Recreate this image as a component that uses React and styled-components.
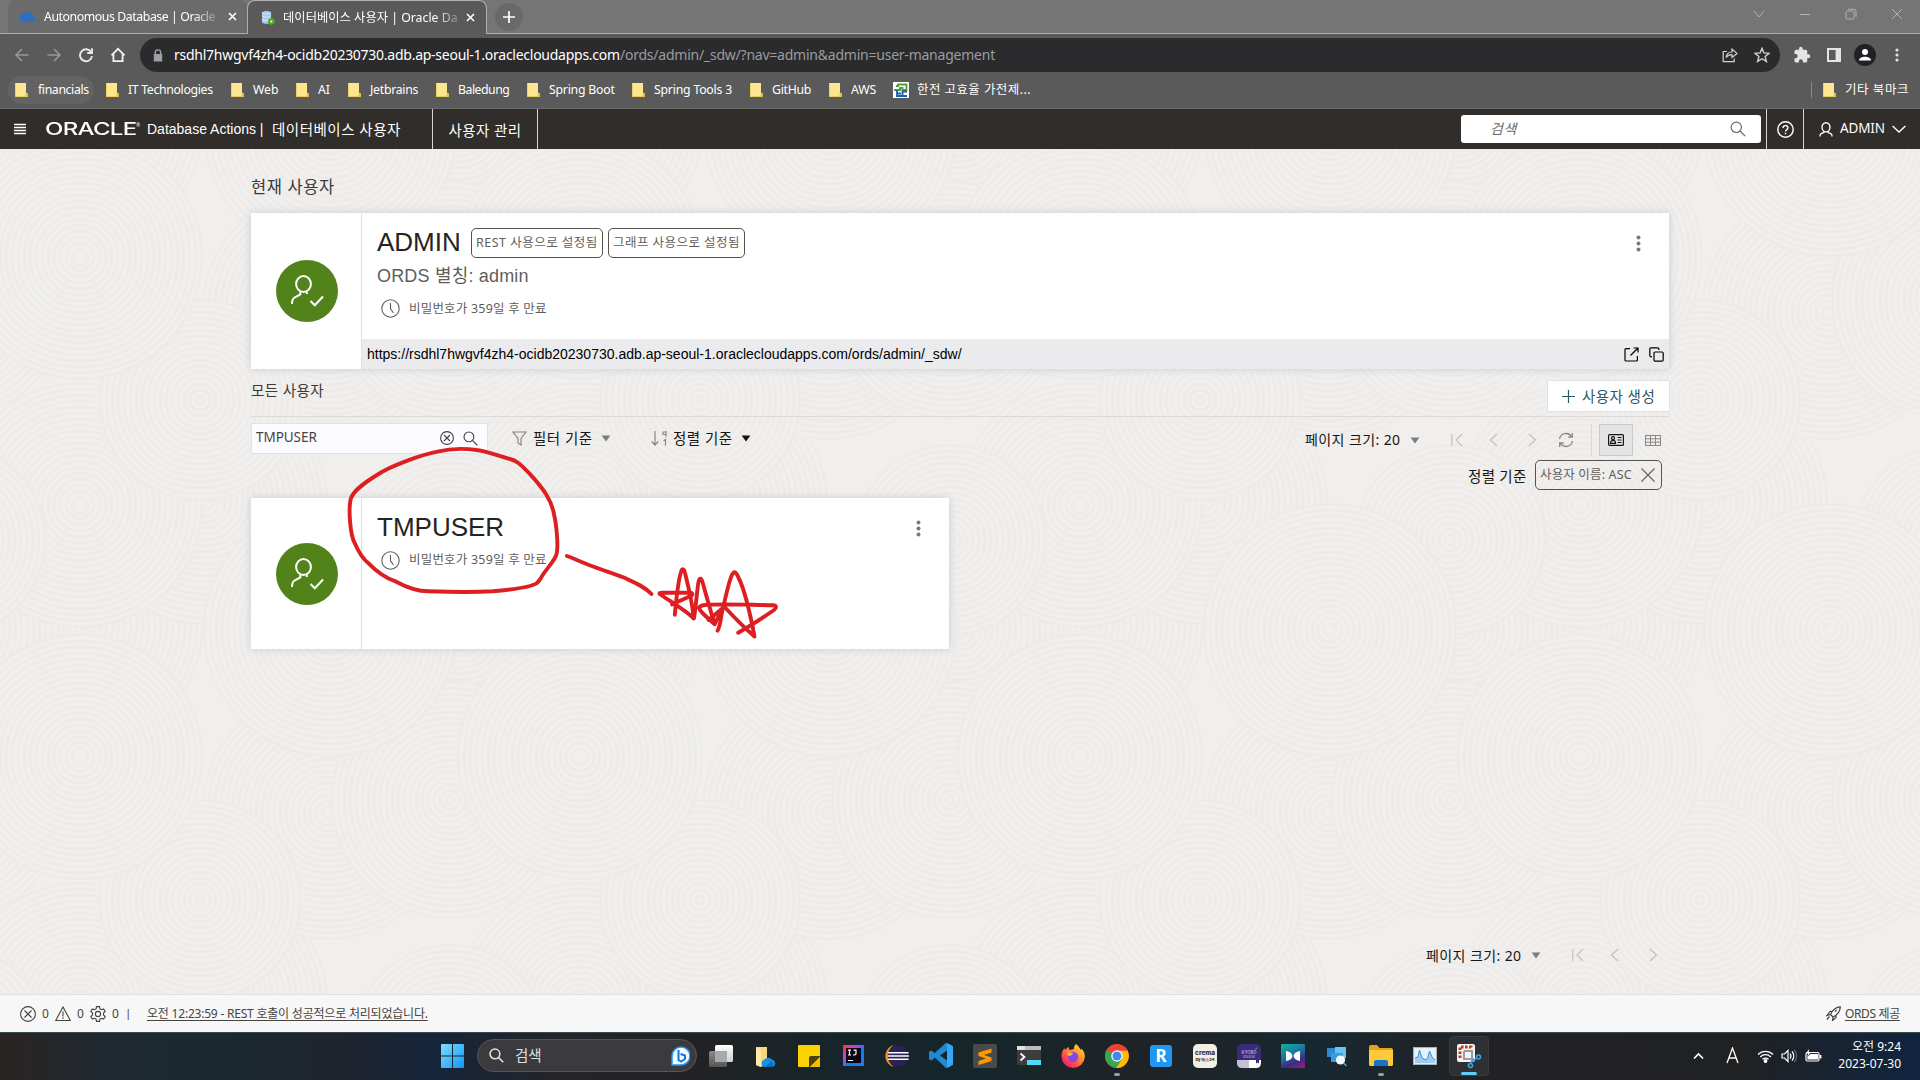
import React from "react";
import styled, { createGlobalStyle, css } from "styled-components";

const ui = `"Noto Sans", "Noto Sans CJK KR", sans-serif`;
const arial = `"Liberation Sans", "Noto Sans CJK KR", sans-serif`;

const Global = createGlobalStyle`
  html, body { margin: 0; padding: 0; overflow: hidden; }
  * { box-sizing: border-box; }
  body { font-family: ${ui}; line-height: 1; }
  svg { display: block; flex: none; }
`;

const Screen = styled.div`
  position: relative;
  width: 1920px;
  height: 1080px;
  display: flex;
  flex-direction: column;
  overflow: hidden;
`;

const T = styled.span`
  display: inline-block;
  flex: none;
  white-space: pre;
  width: ${(p) => (p.$w ? p.$w + "px" : "auto")};
  font-size: ${(p) => p.$s || 13}px;
  color: ${(p) => p.$c || "inherit"};
  letter-spacing: ${(p) => p.$ls || 0}px;
  margin-left: ${(p) => p.$ml || 0}px;
  padding-top: ${(p) => p.$d || 0}px;
  line-height: 1.3;
  ${(p) => p.$arial && css`font-family: ${arial};`}
  ${(p) => p.$fade && css`
    overflow: hidden;
    mask-image: linear-gradient(to right, #000 86%, transparent 104%);
  `}
`;

const Svg = styled.svg`
  margin-left: ${(p) => p.$ml}px;
`;

function Icon({ w = 16, h = w, vb, ml = 0, c = "currentColor", sw = 1.2, fill = "none", children }) {
  return (
    <Svg width={w} height={h} viewBox={vb || `0 0 ${w} ${h}`} $ml={ml}
      fill={fill} stroke={fill === "none" ? c : "none"} strokeWidth={sw}>
      {children}
    </Svg>
  );
}

/* ---------- browser chrome ---------- */
const TabStrip = styled.div`
  height: 34px;
  flex: none;
  display: flex;
  background: #757575;
  border-bottom: 1px solid #adb0ad;
  padding-left: 8px;
`;
const Tab = styled.div`
  position: relative;
  width: ${(p) => p.$w}px;
  height: ${(p) => (p.$active ? 34 : 33)}px;
  display: flex;
  align-items: center;
  padding-left: ${(p) => (p.$active ? 13 : 11)}px;
  color: #fff;
  background: ${(p) => (p.$active ? "#5a5a5a" : "#6b6b6b")};
  border-radius: 8px 8px 0 0;
  ${(p) => p.$active && css`
    border: 1px solid #adb0ad;
    border-bottom: none;
    z-index: 1;
  `}
`;
const NewTab = styled.div`
  width: 28px;
  height: 28px;
  margin: 3px 0 0 8px;
  border-radius: 50%;
  background: #696969;
  color: #fff;
  display: grid;
  place-items: center;
`;
const WindowButtons = styled.div`
  margin-left: auto;
  display: flex;
  align-items: center;
  height: 28px;
  gap: 34px;
  padding-right: 17px;
  color: #b4b4b4;
`;
const Toolbar = styled.div`
  height: 42px;
  flex: none;
  background: #5a5a5a;
  display: flex;
  align-items: center;
  padding-left: 14px;
  color: #fff;
`;
const NavIcons = styled.div`
  display: flex;
  gap: 16px;
  width: 126px;
`;
const Omnibox = styled.div`
  width: 1640px;
  height: 34px;
  border-radius: 17px;
  background: #2b2b2d;
  display: flex;
  align-items: center;
  padding-left: 13px;
`;
const OmniActions = styled.div`
  margin-left: auto;
  display: flex;
  gap: 16px;
  padding-right: 10px;
  color: #d0d0d0;
`;
const ToolIcons = styled.div`
  display: flex;
  align-items: center;
  gap: 13px;
  margin-left: 13px;
  color: #e4e4e4;
`;
const Bookmarks = styled.div`
  height: 33px;
  flex: none;
  background: #5a5a5a;
  border-bottom: 1px solid #6a6c69;
  display: flex;
  align-items: center;
  padding: 0 11px 4px 15px;
  color: #fff;
`;
const Bookmark = styled.div`
  width: ${(p) => p.$w}px;
  height: 28px;
  display: flex;
  align-items: center;
  ${(p) => p.$hot && css`
    width: 86px;
    margin: 0 12px 0 -7px;
    padding-left: 7px;
    border-radius: 14px;
    background: #636363;
  `}
`;
const BookmarkEnd = styled.div`
  margin-left: auto;
  display: flex;
  align-items: center;
  height: 16px;
  border-left: 1px solid #86888a;
  padding-left: 11px;
`;

const Folder = () => (
  <Icon w={13} h={14} fill="#fde690">
    <path d="M0 0H11V10L12.6 10V14H0Z" />
    <path d="M11 9.6L12.8 10.4V14H10.2Z" fill="#e6c445" />
    <path d="M0 13.2H11V14H0ZM0 0H.7V14H0Z" fill="#e6c95a" />
  </Icon>
);

const bookmarks = [
  ["financials", 91, 51, -0.38], ["IT Technologies", 125, 85, -0.34], ["Web", 65, 26, -0.1], ["AI", 52, 12, -0.2],
  ["Jetbrains", 88, 48, -0.28], ["Baledung", 91, 51, -0.5], ["Spring Boot", 105, 66, -0.24],
  ["Spring Tools 3", 118, 78, -0.22], ["GitHub", 79, 39, -0.3], ["AWS", 64, 25, -0.15],
];

function Browser() {
  return (
    <>
      <TabStrip>
        <Tab $w={239}>
          <Icon w={18} h={11} fill="#2e6fc0">
            <path d="M4 11A3.6 3.6 0 0 1 3 4 5 5 0 0 1 11 2.2 4.6 4.6 0 0 1 15 6 2.7 2.7 0 0 1 15 11Z" />
          </Icon>
          <T $s={12.3} $w={173} $ls={-0.43} $ml={7} $fade>Autonomous Database | Oracle</T>
          <Icon w={9} ml={11} sw={1.6}><path d="M1 1L8 8M8 1L1 8" /></Icon>
        </Tab>
        <Tab $w={240} $active>
          <Icon w={14} h={15} fill="#a9c8ee">
            <path d="M1 2.5C1 .4 10 .4 10 2.5V12C10 14.4 1 14.4 1 12Z" />
            <path d="M1 2.5C1 4.6 10 4.6 10 2.5M1 5.7C1 7.8 10 7.8 10 5.7M1 9C1 11 10 11 10 9" fill="none" stroke="#e9f2fd" strokeWidth=".8" />
            <circle cx="10.3" cy="11.5" r="3.3" fill="#4fae1f" /><circle cx="10.3" cy="11.5" r="1" fill="#fff" />
          </Icon>
          <T $s={12.3} $w={176} $ml={8} $fade>데이터베이스 사용자 | Oracle Da</T>
          <Icon w={9} ml={7} sw={1.6}><path d="M1 1L8 8M8 1L1 8" /></Icon>
        </Tab>
        <NewTab><Icon w={12} sw={1.7}><path d="M6 0V12M0 6H12" /></Icon></NewTab>
        <WindowButtons>
          <Icon w={12} sw={1}><path d="M1 3L6 9L11 3" /></Icon>
          <Icon w={12} sw={1}><path d="M1 6.5H11" /></Icon>
          <Icon w={12} sw={1}><rect x="1" y="3" width="8" height="8" rx="1.5" /><path d="M3 1.2H8.6A2.4 2.4 0 0 1 11 3.6V9" /></Icon>
          <Icon w={12} sw={1}><path d="M1 1L11 11M11 1L1 11" /></Icon>
        </WindowButtons>
      </TabStrip>
      <Toolbar>
        <NavIcons>
          <Icon c="#989898" sw={1.6}><path d="M14.5 8H2M8 2L2 8L8 14" /></Icon>
          <Icon c="#989898" sw={1.6}><path d="M1.5 8H14M8 2L14 8L8 14" /></Icon>
          <Icon c="#e8e8e8" sw={1.9}><path d="M13.2 5.2A6 6 0 1 0 14 9M14 1.2V6H9.2" /></Icon>
          <Icon c="#f0f0f0" sw={1.8}><path d="M1.5 8.3L8 1.8L14.5 8.3M3.4 7V14.2H12.6V7" /></Icon>
        </NavIcons>
        <Omnibox>
          <Icon w={10} h={13} fill="#9aa0a6"><path d="M1.6 5V3.6a3.4 3.4 0 0 1 6.8 0V5H9.2V12.4H.8V5ZM3 5H7V3.6a2 2 0 0 0-4 0Z" /></Icon>
          <T $s={14} $w={446} $ls={-0.26} $ml={11}>rsdhl7hwgvf4zh4-ocidb20230730.adb.ap-seoul-1.oraclecloudapps.com</T>
          <T $s={14} $w={376} $ls={-0.23} $c="#9a9ca0">/ords/admin/_sdw/?nav=admin&amp;admin=user-management</T>
          <OmniActions>
            <Icon><path d="M5 4.5H1.2V14.6H12.2V11.5M4 10.5C4.5 7 7 5 10 5V2L15 6.4L10 10.5V7.7C7.5 7.7 5.5 8.5 4 10.5Z" /></Icon>
            <Icon sw={1.4}><path d="M8 1.2L9.9 5.9L15 6.3L11.1 9.5L12.4 14.4L8 11.7L3.6 14.4L4.9 9.5L1 6.3L6.1 5.9Z" /></Icon>
          </OmniActions>
        </Omnibox>
        <ToolIcons>
          <Icon w={18} h={18} vb="0 0 24 24" fill="currentColor"><path d="M20.5 11H19V7a2 2 0 0 0-2-2h-4V3.5a2.5 2.5 0 0 0-5 0V5H4a2 2 0 0 0-2 2v3.8h1.5a2.7 2.7 0 0 1 0 5.4H2V20a2 2 0 0 0 2 2h3.8v-1.5a2.7 2.7 0 0 1 5.4 0V22H17a2 2 0 0 0 2-2v-4h1.5a2.5 2.5 0 0 0 0-5z" /></Icon>
          <Icon w={14} ml={3} fill="currentColor"><path fillRule="evenodd" d="M0 0H14V14H0ZM2 2V12H8.6V2Z" /></Icon>
          <Icon w={22} fill="#202124"><circle cx="11" cy="11" r="11" /><circle cx="11" cy="8" r="3" fill="#fff" /><path d="M5 16.5C5 11.5 17 11.5 17 16.5Z" fill="#fff" /></Icon>
          <Icon w={4} h={14} ml={6} fill="currentColor"><circle cx="2" cy="2" r="1.6" /><circle cx="2" cy="7" r="1.6" /><circle cx="2" cy="12" r="1.6" /></Icon>
        </ToolIcons>
      </Toolbar>
      <Bookmarks>
        {bookmarks.map(([name, w, tw, ls], i) => (
          <Bookmark key={name} $w={w} $hot={i === 0}>
            <Folder />
            <T $s={12.3} $w={tw} $ls={ls} $ml={i === 0 ? 10 : 9}>{name}</T>
          </Bookmark>
        ))}
        <Icon w={16} fill="#fff">
          <rect width="16" height="16" />
          <path d="M3 4H6M5 4V2.5H13.5V8H9.5V5M1 8H7V6H9" fill="none" stroke="#4ba32f" strokeWidth="1.8" />
          <path d="M4 8V11.5H8M4 11V14H14M14 9.5H9.5V13" fill="none" stroke="#1d5fb4" strokeWidth="1.8" />
        </Icon>
        <T $s={12.5} $w={114} $ls={0.42} $ml={8}>한전 고효율 가전제...</T>
        <BookmarkEnd><Folder /><T $s={12.5} $w={64} $ls={0.54} $ml={9}>기타 북마크</T></BookmarkEnd>
      </Bookmarks>
    </>
  );
}

/* ---------- application header ---------- */
const Header = styled.header`
  height: 40px;
  flex: none;
  background: #312d2a;
  color: #fff;
  display: flex;
  align-items: center;
`;
const Brand = styled.div`
  width: 433px;
  height: 40px;
  padding-left: 14px;
  display: flex;
  align-items: center;
  border-right: 1px solid #d8d6d4;
`;
const Wordmark = styled.span`
  width: 91px;
  margin-left: 19px;
  font: 500 17px/1 Inter, sans-serif;
  transform: scaleX(1.41);
  transform-origin: left;
  white-space: nowrap;
  letter-spacing: -0.5px;
`;
const Registered = styled.span`
  width: 4px;
  height: 12px;
  font-size: 5px;
`;
const HeaderCell = styled.div`
  height: 40px;
  width: ${(p) => p.$w}px;
  display: flex;
  align-items: center;
  justify-content: ${(p) => (p.$start ? "flex-start" : "center")};
  padding-left: ${(p) => p.$pl || 0}px;
  ${(p) => p.$l && "border-left: 1px solid #d8d6d4;"}
  ${(p) => p.$r && "border-right: 1px solid #d8d6d4;"}
`;
const HeaderSearch = styled.div`
  width: 300px;
  height: 28px;
  margin: 0 5px 0 auto;
  border-radius: 3px;
  background: #fff;
  color: #6b6966;
  display: flex;
  align-items: center;
  justify-content: space-between;
  padding: 0 15px 0 29px;
  font-style: italic;
`;

const Search = ({ s = 16, c, sw = 1.2, ml }) => (
  <Icon w={s} vb="0 0 16 16" c={c} sw={sw} ml={ml}><circle cx="6.3" cy="6.3" r="5.2" /><path d="M10 10L15.2 15.2" /></Icon>
);

function AppHeader() {
  return (
    <Header>
      <Brand>
        <Icon w={12} h={12} sw={1.3}><path d="M0 1.5H12M0 4.5H12M0 7.5H12M0 10.5H12" /></Icon>
        <Wordmark>ORACLE</Wordmark>
        <Registered>®</Registered>
        <T $s={14} $w={118} $ml={7} $arial>Database Actions |</T>
        <T $s={14.5} $w={130} $ls={0.5} $ml={7}>데이터베이스 사용자</T>
      </Brand>
      <HeaderCell $w={105} $r><T $s={14.5} $w={73} $ls={0.4} $d={2}>사용자 관리</T></HeaderCell>
      <HeaderSearch><T $s={14} $w={28} $ls={0.5} $d={1}>검색</T><Search c="#6b6966" /></HeaderSearch>
      <HeaderCell $w={37} $l>
        <Icon w={17} sw={1.4}><circle cx="8.5" cy="8.5" r="7.7" /><path d="M6 7C6 3.8 11 3.8 11 6.8C11 8.6 8.5 8.6 8.5 10.5M8.5 11.7V13.2" /></Icon>
      </HeaderCell>
      <HeaderCell $w={117} $l $start $pl={15}>
        <Icon w={14} h={15} sw={1.4}><ellipse cx="7" cy="5.3" rx="4" ry="4.6" /><path d="M5 9.3V10.3L1.8 11.8Q1 12.2 1 14.5M9 9.3V10.3L12.2 11.8Q13 12.2 13 14.5" /></Icon>
        <T $s={13.5} $w={45} $ls={-0.15} $ml={7}>ADMIN</T>
        <Icon w={14} h={8} ml={7} sw={1.4}><path d="M.6 1L7 7L13.4 1" /></Icon>
      </HeaderCell>
    </Header>
  );
}

/* ---------- page body ---------- */
const Main = styled.main`
  position: relative;
  height: 845px;
  flex: none;
  background: #f0efed;
`;
const TextureLayer = styled.svg`
  position: absolute;
  inset: 0;
`;
const Content = styled.div`
  position: relative;
  height: 100%;
  display: flex;
  flex-direction: column;
  padding: 0 251px;
  color: #161513;
`;
const Heading = styled.div`
  height: 64px;
  display: flex;
  align-items: center;
  padding-top: 12px;
  color: #3c3a38;
`;
const Card = styled.section`
  width: ${(p) => p.$w}px;
  height: ${(p) => p.$h}px;
  flex: none;
  display: flex;
  background: #fff;
  box-shadow: 0 0 8px rgba(0, 0, 0, 0.14);
`;
const AvatarCell = styled.div`
  width: 111px;
  display: flex;
  align-items: center;
  justify-content: center;
  padding-left: 2px;
  border-right: 1px solid #dfdfdf;
`;
const Avatar = styled.div`
  width: 62px;
  height: 62px;
  border-radius: 50%;
  background: #52821a;
  color: #fff;
  display: grid;
  place-items: center;
`;
const CardBody = styled.div`
  flex: 1;
  display: flex;
  flex-direction: column;
`;
const CardTop = styled.div`
  flex: 1;
  display: flex;
  justify-content: space-between;
  padding: 14px 28px 0 15px;
`;
const Info = styled.div`
  display: flex;
  flex-direction: column;
`;
const TitleLine = styled.div`
  height: 32px;
  display: flex;
  align-items: center;
  color: #262422;
`;
const InfoLine = styled.div`
  height: ${(p) => p.$h}px;
  display: flex;
  align-items: center;
  color: #5f5d5b;
  padding-left: ${(p) => p.$pl || 0}px;
`;
const Chip = styled.div`
  height: 30px;
  width: ${(p) => p.$w}px;
  margin-left: ${(p) => p.$ml}px;
  padding-left: 4px;
  border: 1px solid #55534f;
  border-radius: 5px;
  display: flex;
  align-items: center;
  color: #62605e;
`;
const UrlBar = styled.div`
  height: 30px;
  background: #ebebed;
  display: flex;
  align-items: center;
  padding: 0 5px;
  color: #000;
`;
const UrlActions = styled.div`
  display: flex;
  gap: 10px;
  margin-left: auto;
`;
const AllUsers = styled.div`
  height: 48px;
  flex: none;
  display: flex;
  justify-content: space-between;
  border-bottom: 1px solid #dcdad8;
  color: #3c3a38;
`;
const AllUsersTitle = styled.div`
  height: 42px;
  display: flex;
  align-items: center;
`;
const CreateButton = styled.div`
  width: 121px;
  height: 30px;
  margin-top: 12px;
  padding-left: 14px;
  display: flex;
  align-items: center;
  background: #fff;
  box-shadow: 0 0 1px rgba(0, 0, 0, 0.3);
  color: #2c5967;
`;
const ListBar = styled.div`
  height: 43px;
  flex: none;
  display: flex;
  align-items: center;
`;
const FilterField = styled.div`
  width: 237px;
  height: 31px;
  margin: 0 24px 1px 0;
  display: flex;
  align-items: center;
  background: #fcfbff;
  border: 1px solid #e4e2e0;
  padding-left: 4px;
  color: #45433f;
`;
const Menu = styled.div`
  display: flex;
  align-items: center;
  margin-right: 40px;
  color: #161513;
`;
const PagerRow = styled.div`
  display: flex;
  align-items: center;
  color: #161513;
`;
const ListRight = styled.div`
  margin: 3px 8px 0 auto;
  display: flex;
  align-items: center;
`;
const ViewToggle = styled.div`
  width: 34px;
  height: 32px;
  margin: 0 12px 0 7px;
  background: #e4e4e4;
  border: 1px solid #cbcbcb;
  display: grid;
  place-items: center;
`;
const Rule = styled.div`
  width: 1px;
  height: 32px;
  margin-left: 17px;
  background: #dcdad8;
`;
const SortRow = styled.div`
  height: 30px;
  flex: none;
  display: flex;
  align-items: center;
  justify-content: flex-end;
  padding-right: 7px;
  margin-bottom: 8px;
`;
const BottomPager = styled.div`
  margin: auto 11px 29px auto;
`;

const centres = [
  [85, 125, 118], [460, 130, 122], [205, 2, 122], [80, 5, 122], [450, 40, 95],
  [328, 313, 126], [200, 400, 100], [450, 300, 118], [330, 130, 126], [80, 257, 122],
];
function Texture() {
  const stacks = [];
  centres.forEach(([x, y, r], i) => {
    for (const dx of [-500, 0, 500]) for (const dy of [-500, 0, 500]) {
      const cx = x + dx, cy = y + dy;
      if (cx + r < 0 || cx - r > 500 || cy + r < 0 || cy - r > 500) continue;
      const rings = [];
      for (let q = r; q > 2; q -= 6) rings.push(<circle key={q} cx={cx} cy={cy} r={q} />);
      stacks.push(<g key={`${i}${dx}${dy}`}>{rings}</g>);
    }
  });
  return (
    <TextureLayer width="1920" height="845">
      <defs>
        <pattern id="swirl" width="500" height="500" patternUnits="userSpaceOnUse" patternTransform="translate(0 -149)">
          <g fill="#f0efed" stroke="#ecebe9" strokeWidth="2.2">{stacks}</g>
        </pattern>
      </defs>
      <rect width="1920" height="845" fill="url(#swirl)" />
    </TextureLayer>
  );
}

const UserCheck = () => (
  <Avatar>
    <Icon w={34} h={32} sw={2}>
      <ellipse cx="13.5" cy="9" rx="7.4" ry="8" />
      <path d="M10.3 16.5V19.5L4.5 22.500Q2 24 2 29M16.800 16.5V19" />
      <path d="M20.5 26L24.8 30.3L33 21.5" />
    </Icon>
  </Avatar>
);
const Clock = () => <Icon w={19} c="#5f5d5b" sw={1.1}><circle cx="9.5" cy="9.5" r="8.7" /><path d="M9.5 4V9.8L12.5 14" /></Icon>;
const Kebab = () => (
  <Icon w={5} h={17} fill="#7c7a78"><circle cx="2.5" cy="2.5" r="2" /><circle cx="2.5" cy="8.5" r="2" /><circle cx="2.5" cy="14.5" r="2" /></Icon>
);
const Caret = ({ c = "#7c7c7c", ml = 9 }) => <Icon w={10} h={7} ml={ml} fill={c}><path d="M.6 .5H9.4L5 6.5Z" /></Icon>;

const Expiry = () => (
  <>
    <Clock />
    <T $s={12.5} $w={138} $ls={0.2} $ml={9} $d={1}>비밀번호가 359일 후 만료</T>
  </>
);

const Pager = () => (
  <PagerRow>
    <T $s={14} $w={96} $ls={0.4} $d={1}>페이지 크기: 20</T>
    <Caret />
    <Icon w={12} h={14} ml={31} c="#c3c1bf"><path d="M.8 1V13M11 1L5 7L11 13" /></Icon>
    <Icon w={9} h={14} ml={26} c="#c3c1bf"><path d="M8 1L1.5 7L8 13" /></Icon>
    <Icon w={9} h={14} ml={30} c="#c3c1bf"><path d="M1 1L7.5 7L1 13" /></Icon>
  </PagerRow>
);

function Page() {
  return (
    <Main>
      <Texture />
      <Content>
        <Heading><T $s={16.5} $w={84} $ls={0.6}>현재 사용자</T></Heading>
        <Card $w={1418} $h={156}>
          <AvatarCell><UserCheck /></AvatarCell>
          <CardBody>
            <CardTop>
              <Info>
                <TitleLine>
                  <T $s={26} $w={84} $arial>ADMIN</T>
                  <Chip $w={132} $ml={10}><T $s={12.5} $w={123} $ls={0.48} $d={1}>REST 사용으로 설정됨</T></Chip>
                  <Chip $w={137} $ml={5}><T $s={12.5} $w={128} $ls={0.45} $d={1}>그래프 사용으로 설정됨</T></Chip>
                </TitleLine>
                <InfoLine $h={34}><T $s={18} $w={152} $ls={0.18} $d={2} $arial>ORDS 별칭: admin</T></InfoLine>
                <InfoLine $h={31} $pl={4}><Expiry /></InfoLine>
              </Info>
              <Info><TitleLine><Kebab /></TitleLine></Info>
            </CardTop>
            <UrlBar>
              <T $s={14} $w={596} $arial>https://rsdhl7hwgvf4zh4-ocidb20230730.adb.ap-seoul-1.oraclecloudapps.com/ords/admin/_sdw/</T>
              <UrlActions>
                <Icon w={15}><path d="M6 1.6H2A1 1 0 0 0 1 2.6V13A1 1 0 0 0 2 14H12.4A1 1 0 0 0 13.4 13V9M9.5 1H14V5.5M14 1L6.5 8.5" /></Icon>
                <Icon w={15}><rect x="5" y="5" width="9.2" height="9.2" rx="1.2" /><path d="M3 9.8H2A1.2 1.2 0 0 1 .8 8.6V2A1.2 1.2 0 0 1 2 .8H8.6A1.2 1.2 0 0 1 9.8 2V3" /></Icon>
              </UrlActions>
            </UrlBar>
          </CardBody>
        </Card>
        <AllUsers>
          <AllUsersTitle><T $s={14.5} $w={73} $ls={0.4}>모든 사용자</T></AllUsersTitle>
          <CreateButton><Icon w={13}><path d="M6.5 0V13M0 6.5H13" /></Icon><T $s={14.5} $w={74} $ls={0.45} $ml={7} $d={1}>사용자 생성</T></CreateButton>
        </AllUsers>
        <ListBar>
          <FilterField>
            <T $s={13.5} $w={61} $ls={-0.05}>TMPUSER</T>
            <Icon w={14} ml={123} sw={1.1}><circle cx="7" cy="7" r="6.4" /><path d="M4 4L10 10M10 4L4 10" /></Icon>
            <Search s={15} ml={9} />
          </FilterField>
          <Menu>
            <Icon w={15} h={15} c="#8a8886"><path d="M1 1H14L9 7.5V14L6 12V7.5Z" /></Icon>
            <T $s={14.5} $w={60} $ls={0.5} $ml={6}>필터 기준</T>
            <Caret ml={8} />
          </Menu>
          <Menu>
            <Icon w={17} h={15} c="#8a8886"><path d="M4 0V14M.8 10.5L4 14L7.2 10.5M15 0V6M15 1H12V3.5H15M12.5 10L14.5 8.5V14.5" /></Icon>
            <T $s={14.5} $w={60} $ls={0.5} $ml={5}>정렬 기준</T>
            <Caret ml={8} c="#161513" />
          </Menu>
          <ListRight>
            <Pager />
            <Icon w={16} ml={21} c="#8a8886" sw={1.3}><path d="M1.5 7A6.6 6.6 0 0 1 13.5 4.5M14.5 9A6.6 6.6 0 0 1 2.5 11.5M14.3 1V5H10.3M1.7 15V11H5.7" /></Icon>
            <Rule />
            <ViewToggle>
              <Icon w={16} h={12} c="#161513"><rect x=".6" y=".6" width="14.8" height="10.8" rx="1" /><circle cx="5" cy="4.2" r="1.5" /><path d="M2.5 9.3C2.5 5.5 7.5 5.5 7.5 9.3ZM9.5 3.5H13.5M9.5 6H13.5M9.5 8.5H13.5" /></Icon>
            </ViewToggle>
            <Icon w={16} h={11} c="#8a8886" sw={1}><rect x=".5" y=".5" width="15" height="10" /><path d="M.5 3.8H15.5M.5 7.2H15.5M5.5 .5V10.5M10.5 .5V10.5" /></Icon>
          </ListRight>
        </ListBar>
        <SortRow>
          <T $s={14.5} $w={59} $ls={0.3} $d={2}>정렬 기준</T>
          <Chip $w={127} $ml={8}>
            <T $s={12.5} $w={92} $ls={0.15} $d={1}>사용자 이름: ASC</T>
            <Icon w={14} ml={9} sw={1.1}><path d="M.5 .5L13.5 13.5M13.5 .5L.5 13.5" /></Icon>
          </Chip>
        </SortRow>
        <Card $w={698} $h={151}>
          <AvatarCell><UserCheck /></AvatarCell>
          <CardBody>
            <CardTop>
              <Info>
                <TitleLine><T $s={26} $w={128} $arial>TMPUSER</T></TitleLine>
                <InfoLine $h={32} $pl={4}><Expiry /></InfoLine>
              </Info>
              <Info><TitleLine><Kebab /></TitleLine></Info>
            </CardTop>
          </CardBody>
        </Card>
        <BottomPager><Pager /></BottomPager>
      </Content>
    </Main>
  );
}

/* ---------- status bar ---------- */
const StatusBar = styled.footer`
  height: 38px;
  flex: none;
  display: flex;
  align-items: center;
  background: #f7f7f7;
  border-top: 1px solid #e2e1e0;
  padding: 0 20px;
  color: #45433f;
`;
const Link = styled.span`
  display: inline-flex;
  text-decoration: underline;
  text-underline-offset: 2px;
  text-decoration-skip-ink: none;
  margin-left: ${(p) => p.$ml}px;
`;
const Push = styled.div`
  margin-left: auto;
`;

function Status() {
  return (
    <StatusBar>
      <Icon w={16} sw={1.1}><circle cx="8" cy="8" r="7.4" /><path d="M4.5 4.5L11.5 11.5M11.5 4.5L4.5 11.5" /></Icon>
      <T $s={12} $w={7} $ml={6}>0</T>
      <Icon w={16} ml={6} sw={1.1}><path d="M8 1L15.3 14.5H.7ZM8 5.5V10.5M8 11.5V13" /></Icon>
      <T $s={12} $w={7} $ml={6}>0</T>
      <Icon w={16} h={16} ml={6} sw={1.1}>
        <path d="M6.5 .6H9.5L9.9 2.8L11.5 3.7L13.6 2.9L15.2 5.5L13.5 7V9L15.2 10.5L13.6 13.1L11.5 12.3L9.9 13.2L9.5 15.4H6.5L6.1 13.2L4.5 12.3L2.4 13.1L.8 10.5L2.5 9V7L.8 5.5L2.4 2.9L4.5 3.7L6.1 2.8Z" />
        <circle cx="8" cy="8" r="2.6" />
      </Icon>
      <T $s={12} $w={7} $ml={6}>0</T>
      <T $s={11.5} $w={6} $ml={6}>|</T>
      <Link $ml={16}><T $s={12} $w={281} $ls={-0.21}>오전 12:23:59 - REST 호출이 성공적으로 처리되었습니다.</T></Link>
      <Push />
      <Icon w={15} h={15}><path d="M4.5 8.5C6.5 4 10 1 14.3 .8C14.2 5 11.5 9 7 11ZM4.5 8.5L1 9.5L4 5.5L6 5.5M7 11L6.5 14.5L10 11.5V9.5M3.5 10.5L.8 13.5M9 5.5L10.5 4" /></Icon>
      <Link $ml={4}><T $s={12} $w={55} $ls={-0.36}>ORDS 제공</T></Link>
    </StatusBar>
  );
}

/* ---------- windows taskbar ---------- */
const Taskbar = styled.div`
  height: 48px;
  flex: none;
  display: flex;
  align-items: center;
  padding: 0 0 2px 441px;
  color: #fff;
  border-top: 1px solid #3b4a50;
  background: linear-gradient(90deg, #2a2422 0, #202830 100px, #1a2a30 200px, #1f242e 340px, #15253a 430px, #252428 560px, #222224 690px, #16252a 850px, #15262b 980px, #202326 1150px, #172830 1320px, #222224 1480px, #202122 1740px, #13243a 1880px, #10243f 1920px);
`;
const TaskSearch = styled.div`
  width: 220px;
  height: 33px;
  margin: 0 2px 0 13px;
  border-radius: 17px;
  background: #3b3b3f;
  border: 1px solid #55555a;
  display: flex;
  align-items: center;
  padding-left: 11px;
  color: #e0e0e0;
`;
const App44 = styled.div`
  position: relative;
  width: ${(p) => (p.$on ? 40 : 44)}px;
  margin: 0 ${(p) => (p.$on ? 2 : 0)}px;
  height: 40px;
  display: grid;
  place-items: center;
  border-radius: 4px;
  ${(p) => p.$on && "background: #2e3034; border: 1px solid #393b3f;"}
  &::after {
    content: "";
    position: absolute;
    bottom: 0;
    left: 50%;
    height: 3px;
    border-radius: 2px;
    width: ${(p) => (p.$on ? 16 : p.$run ? 6 : 0)}px;
    margin-left: ${(p) => (p.$on ? -8 : -3)}px;
    background: ${(p) => (p.$on ? "#60cdff" : "#9a9c9e")};
  }
`;
const Tile = styled.div`
  width: ${(p) => p.$sz || 24}px;
  height: ${(p) => p.$sz || 24}px;
  border-radius: ${(p) => p.$r || 3}px;
  background: ${(p) => p.$bg};
  color: ${(p) => p.$c};
  font: ${(p) => p.$f};
  text-align: center;
  white-space: pre;
  display: flex;
  flex-direction: column;
  align-items: center;
  justify-content: center;
`;
const Tray = styled.div`
  margin-left: auto;
  display: flex;
  align-items: center;
  padding-right: 19px;
`;
const ClockBox = styled.div`
  width: 66px;
  margin-left: 13px;
  display: flex;
  flex-direction: column;
  align-items: flex-end;
  gap: 1px;
`;

function TaskApps() {
  return (
    <>
      <App44><Icon w={24} h={24} fill="#fff">
        <defs>
          <linearGradient id="tv" x1="0" y1="0" x2="0" y2="1"><stop offset="0" stopColor="#8a8a8a" /><stop offset="1" stopColor="#555" /></linearGradient>
          <linearGradient id="tw" x1="0" y1="0" x2="0" y2="1"><stop offset="0" stopColor="#fff" /><stop offset="1" stopColor="#cfcfcf" /></linearGradient>
        </defs>
        <rect x="6" y="1" width="18" height="17" rx="1.5" fill="url(#tw)" /><rect x="0" y="7" width="18" height="16" rx="1.5" fill="url(#tv)" /><path d="M6 7H18V18H6Z" fill="#a9a9a9" />
      </Icon></App44>
      <App44><Icon w={22} h={22} fill="#f6d57c">
        <path d="M2 2H13V19L7 22L2 20Z" /><path d="M2 2L7 5V22L2 20Z" fill="#ffe9a6" />
        <path d="M10 22A4 4 0 0 1 10.5 14.5A5 5 0 0 1 18 14.5A4 4 0 0 1 19 22Z" fill="#1590e2" /><path d="M11 22L17 16.5A4 4 0 0 1 19 22Z" fill="#0a6cc4" />
      </Icon></App44>
      <App44><Icon w={23} h={24} fill="#fbd304"><rect x="0" y="1" width="22" height="22" rx="1" /><path d="M11 23V14Q11 12 13 12H22V13L12 23Z" fill="#4b3f14" /><path d="M22 13V23H12Z" fill="#f5be00" /></Icon></App44>
      <App44><Icon w={23} h={23} fill="#087cfa">
        <defs><linearGradient id="ij" x1="0" y1="0" x2="1" y2="1"><stop offset="0" stopColor="#fe315d" /><stop offset=".35" stopColor="#b04ce0" /><stop offset=".6" stopColor="#087cfa" /><stop offset="1" stopColor="#3b6ff0" /></linearGradient></defs>
        <path d="M1 1H22V22H1Z" fill="url(#ij)" /><path d="M1 8L8 1H1Z" fill="#fe315d" /><path d="M4 4H19V19H4Z" fill="#0a0510" />
        <path d="M6 6.2H9M7.5 6.2V11M6 11H9M11.5 6.2H14V9.6Q14 11 12.5 11H11M6 16.5H11" fill="none" stroke="#fff" strokeWidth="1.2" />
      </Icon></App44>
      <App44><Icon w={24} h={24} fill="#2c2255">
        <path d="M9 1A11.3 11.3 0 0 0 9 23A13 13 0 0 1 9 1Z" fill="#f7941e" /><circle cx="13" cy="12" r="10.5" />
        <path d="M3 8.8H23.5M2.5 12H24M3 15.2H23.5" stroke="#fff" strokeWidth="1.5" />
      </Icon></App44>
      <App44><Icon w={24} h={25} fill="#1f8ad2">
        <path d="M17 0L24 3.2V21.8L17 25L6 14.5L2.4 17.5L0 16.3V8.7L2.4 7.5L6 10.5ZM18 7.5L11 12.5L18 17.5Z" fillRule="evenodd" /><path d="M17 6.9L0 16.3V15L17 0Z" /><path d="M18 0L24 3.2V21.8L18 25Z" fill="#32a9f0" />
      </Icon></App44>
      <App44><Icon w={24} h={24} fill="#4a4a4a"><rect width="24" height="24" rx="2" /><path d="M18.5 4.5V8.5L11 11L18.5 13.5V17L5.5 21V17L13 14.5L5.5 12V8.5Z" fill="#ff9800" /></Icon></App44>
      <App44><Icon w={24} h={20} fill="#3d3d3d"><path d="M0 0H24V4H0Z" fill="#bdbdbd" /><path d="M0 0H8V4H0Z" fill="#e3e3e3" /><path d="M0 4H24V19H0Z" /><path d="M3.5 7.5L7.5 11L3.5 14.5" fill="none" stroke="#fff" strokeWidth="1.8" /><path d="M10 14H24V19H10Z" fill="#50d8f5" /></Icon></App44>
      <App44><Icon w={24} h={24} fill="#ff7139">
        <defs><linearGradient id="ff" x1="1" y1="0" x2="0.2" y2="1"><stop offset="0" stopColor="#fff14f" /><stop offset=".4" stopColor="#ff9a2b" /><stop offset=".8" stopColor="#ff3a50" /><stop offset="1" stopColor="#e31587" /></linearGradient></defs>
        <path d="M15 0C18 2 19 5 20 6C20.5 5.5 20.5 5 20.5 4.5C23 7.5 24 10 23.8 13A11.7 11.7 0 0 1 .5 13.5C.2 9 1.5 6.5 3.5 4C3.5 5 3.7 5.6 4 6C5 5 7 3 8 3C7.5 4 8 5.5 9 6C10 5.5 12 5.5 13 5C12.5 3 14 1 15 0Z" fill="url(#ff)" />
        <circle cx="12" cy="13" r="5.2" fill="#8a45e5" /><path d="M5.5 9C8 7.5 11 8.5 12.5 10C10.5 10.5 10 12 8 12Q6 11.5 5.5 9Z" fill="#ffb22d" />
      </Icon></App44>
      <App44 $run><Icon w={24} h={24} fill="#ea4335">
        <circle cx="12" cy="12" r="12" /><path d="M12 12L1.6 6A12 12 0 0 0 11 23.95L17.2 15Z" fill="#34a853" /><path d="M12 12L17.2 15L11 24A12 12 0 0 0 22.4 6.5H12Z" fill="#fbbc05" /><path d="M1.6 6A12 12 0 0 1 22.4 6.5H12Z" fill="#ea4335" />
        <circle cx="12" cy="12" r="5.7" fill="#fff" /><circle cx="12" cy="12" r="4.5" fill="#4285f4" />
      </Icon></App44>
      <App44><Tile $sz={22} $bg="#2196f3" $c="#fff" $f={`700 17px/1 ${ui}`}>R</Tile></App44>
      <App44><Tile $bg="#f4efe4" $r={5} $c="#3b2f26" $f="800 7px/8px Inter, sans-serif"><T $s={6.4}>crema</T><T $s={4}>by 예스24</T></Tile></App44>
      <App44><Icon w={24} h={24} fill="#3a2a78">
        <rect width="24" height="24" rx="5" /><path d="M0 16H12V24H5Q0 24 0 19Z" fill="#c4c2d2" /><path d="M12 16H24V19Q24 24 19 24H12Z" fill="#fff" /><path d="M19 16V19.5L20.5 18.5L22 19.5V16Z" fill="#3a2a78" /><path d="M14 3L17 6L20 3V5L17 6Z" fill="#39a35a" />
        <text x="12" y="9.8" fontSize="4.200" fontWeight="600" fill="#b8b0e2" textAnchor="middle" fontFamily="Inter">KYOBO</text>
        <text x="12" y="14" fontSize="4" fill="#b8b0e2" textAnchor="middle" fontFamily="Inter">eBook</text>
      </Icon></App44>
      <App44><Tile $r={1} $bg="linear-gradient(155deg,#13a79c 10%,#1e6f9f 45%,#3b2c86 70%,#9b1c8c 100%)">
        <Icon w={14} h={12} fill="#fff"><path d="M0 1Q6 2 6.5 6Q6 10 0 11ZM14 1Q8 2 7.5 6Q8 10 14 11Z" /></Icon>
      </Tile></App44>
      <App44><Icon w={22} h={22} fill="#4aa9e6">
        <path d="M1 3H14V12H1Z" fill="#2f8bd0" /><path d="M9 2H20V13H9Z" fill="#6cc2f3" /><path d="M5 8H17V17H5Z" fill="#3a9bdf" /><circle cx="14.5" cy="15" r="4.6" fill="#f2f9ff" /><path d="M17.5 18L20.5 21" stroke="#8a97a0" strokeWidth="1.6" />
      </Icon></App44>
      <App44 $run><Icon w={24} h={22} fill="#ffca3a">
        <path d="M0 2Q0 0 2 0H8L10.5 3H22Q24 3 24 5V19Q24 21 22 21H2Q0 21 0 19Z" fill="#e7a21b" /><path d="M0 5H24V19Q24 21 22 21H2Q0 21 0 19Z" /><path d="M5 21V17Q5 15 7 15H17Q19 15 19 17V21Z" fill="#1374c9" />
      </Icon></App44>
      <App44><Icon w={24} h={18} fill="#e9f3fa">
        <rect width="24" height="18" /><path d="M2 16V11L5 10L6.5 3L9 11L13 13L15 10L16.5 4L19 10L22 13V16Z" fill="#9dcdf1" /><path d="M2 11L5 10L6.5 3L9 11L13 13L15 10L16.5 4L19 10L22 13" fill="none" stroke="#3b92d8" strokeWidth="1" /><rect x=".5" y=".5" width="23" height="17" fill="none" stroke="#a9b4bb" />
      </Icon></App44>
      <App44 $on><Icon w={26} h={26} fill="#f4f4f4">
        <rect x="1" y="1" width="18" height="18" rx="2" /><path d="M4 15V4H15V6" fill="none" stroke="#c5391b" strokeWidth="3" strokeDasharray="2.6 1.4" />
        <path d="M8 8H16V17M8 8V16H18" fill="none" stroke="#9a9c9e" strokeWidth="2" /><path d="M16 19L20.5 15M17 16L14.5 20" stroke="#3aa4e6" strokeWidth="1.5" />
        <g fill="none" stroke="#3aa4e6" strokeWidth="1.6"><circle cx="22.5" cy="14" r="2" /><circle cx="14.5" cy="22.5" r="2" /></g>
      </Icon></App44>
    </>
  );
}

function Windows() {
  return (
    <Taskbar>
      <Icon w={23} h={24} fill="#4cc2ff">
        <defs><linearGradient id="wn" x1="0" y1="0" x2="1" y2="1"><stop offset="0" stopColor="#7fdcff" /><stop offset="1" stopColor="#1096f5" /></linearGradient></defs>
        <path fill="url(#wn)" d="M0 1Q0 0 1 0H11V11.5H0ZM12 0H22Q23 0 23 1V11.5H12ZM0 12.5H11V24H1Q0 24 0 23ZM12 12.5H23V23Q23 24 22 24H12Z" />
      </Icon>
      <TaskSearch>
        <Search s={15} sw={1.7} />
        <T $s={14.5} $w={27} $ml={11}>검색</T>
        <Icon w={19} h={20} ml={129} fill="#2b8ff0">
          <path d="M1 19V10A9 9 0 1 1 10 19Z" fill="#f3faff" stroke="#2196f3" strokeWidth="1.5" />
          <path d="M7.5 4V14L10 15.5L14 13V9.5L9.5 8" fill="none" stroke="#1674dc" strokeWidth="2" />
        </Icon>
      </TaskSearch>
      <TaskApps />
      <Tray>
        <Icon w={11} h={8} sw={1.7}><path d="M1 6.5L5.5 2L10 6.5" /></Icon>
        <Icon w={13} h={17} ml={22} sw={1.3}><path d="M1 16L6.5 1L12 16M3 11H10" /></Icon>
        <Icon w={17} h={14} ml={18} sw={1.3}><path d="M1 5.5A10.5 10.5 0 0 1 16 5.5M3.2 8A7.3 7.3 0 0 1 13.8 8M5.5 10.3A4.2 4.2 0 0 1 11.5 10.3" /><circle cx="8.5" cy="12" r="1.3" fill="#fff" /></Icon>
        <Icon w={16} h={14} ml={7} sw={1.2}><path d="M1 5H3.5L7 1.5V12.5L3.5 9H1ZM9 4.5A4 4 0 0 1 9 9.5M11 2.5A6.5 6.5 0 0 1 11 11.5" /><path d="M13.3 1A9 9 0 0 1 13.3 13" stroke="#666" /></Icon>
        <Icon w={17} h={13} ml={8} sw={1.2}><rect x="1" y="3.5" width="13" height="8.5" rx="1.5" /><path d="M3 10V8L6 5.5H12.3V10Z" fill="#fff" /><path d="M15.5 6V9.5" strokeWidth="1.8" /><path d="M4 0L1 4.5H3.2L2 8L6 3H3.8Z" fill="#fff" stroke="none" /></Icon>
        <ClockBox><T $s={12}>오전 9:24</T><T $s={12}>2023-07-30</T></ClockBox>
      </Tray>
    </Taskbar>
  );
}

/* ---------- hand-drawn marker ---------- */
const Marker = styled.svg`
  position: absolute;
  inset: 0;
`;
const strokes = [
  "M540.7 578.3C545 570 556 560 556.8 553C558.5 544 556 523 554.5 516.7C552 500 543 488 529.3 473.3C522 466 518 461 510 459C498 456 485 450.5 476.5 450C466 448.5 452 448 437.4 451.7C420 455 395 465 382.3 471.7C370 479 352 490 350.5 500C348.5 510 350 535 354.8 543.3C359 553 364 560 368.6 563.3C376 571 386 578 396.1 581.7C406 587 418 591.3 428.2 591.3C450 592 480 592 492.5 591.3C508 590 530 588 537 583C539 581 539.5 580 540.7 578.3",
  "M566.9 556C575 559 583 562.5 589 565C602 570 618 575 625.7 578.3C636 583 645 587 651.5 594",
  "M674.8 614.7C676 602 679 578 681 572C682.2 568 684 568.5 685 573C688 585 693 608 693.6 618.5C688 612 668 600 659.7 594Q659 592.7 662 592.7H690Q694 593 691.5 595.5L672 604.5",
  "M694 618C696 606 697 590 698.5 582C699.5 577.5 701.5 577.5 702.8 583C706 595 711 612 714.7 624.3C709 619 700 612 699.3 608.5C699 606 702 605.3 707 604.8C728 603.5 750 605 773 605.3C777 605.6 776.5 608 774 610C764 617 750 626 738.2 632.7M714.7 624L724 606",
  "M717.5 630.7C721 625 721 614 723 608C726 596 729 580 732.5 574C734.5 570.5 736.5 573 738.2 577C746 592 751 618 754.5 636.5C746 629 732 615 724.4 606.7L708.5 620",
];

export default function App() {
  return (
    <Screen>
      <Global />
      <Browser />
      <AppHeader />
      <Page />
      <Status />
      <Windows />
      <Marker width="1920" height="1080" fill="none" stroke="#de1f22" strokeWidth="3.9" strokeLinecap="round" strokeLinejoin="round">
        {strokes.map((d, i) => <path key={i} d={d} />)}
      </Marker>
    </Screen>
  );
}
